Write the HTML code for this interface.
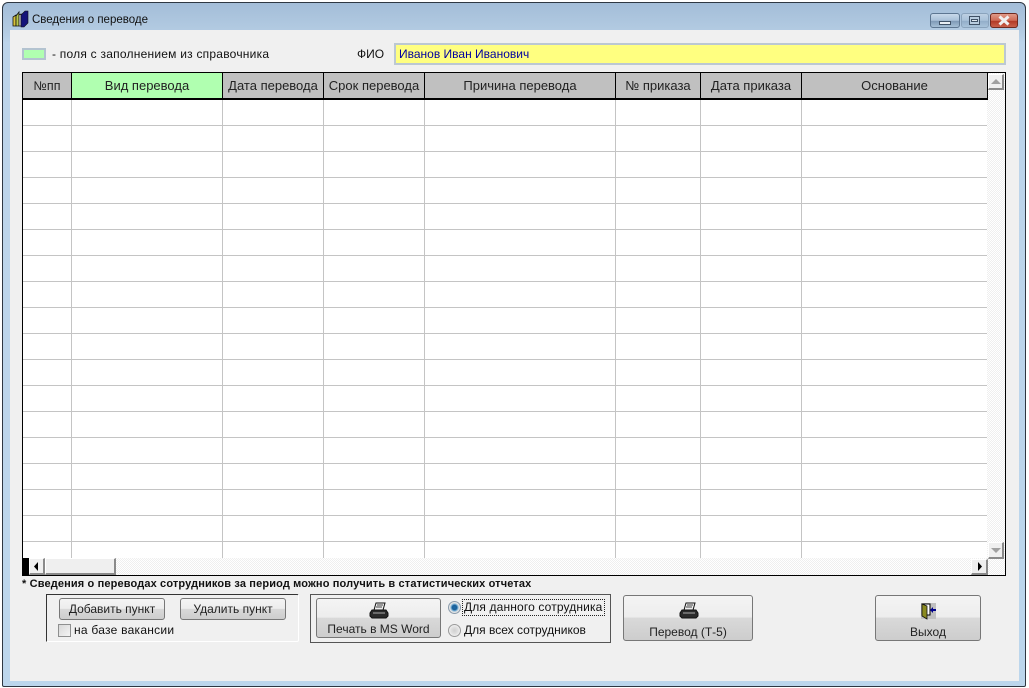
<!DOCTYPE html>
<html><head><meta charset="utf-8"><style>
html,body{margin:0;padding:0;background:#fff}
body{width:1029px;height:688px;position:relative;overflow:hidden;font-family:"Liberation Sans",sans-serif;font-size:12px;color:#111}
div,span{position:absolute;box-sizing:border-box;white-space:nowrap}
svg{position:absolute}
.h{top:73px;height:27px;background:#c0c0c0;border-right:1px solid #000;border-bottom:2px solid #000;text-align:center;line-height:26px;color:#222;font-size:13px}
.v{top:100px;height:458px;width:1px;background:#c4c4c4}
.btn{border:1px solid #777;border-radius:3px;background:linear-gradient(#f4f4f4 0,#ededed 48%,#d9d9d9 50%,#cdcdcd 100%);text-align:center;color:#222}
.sb{background:#efefef;border-top:1px solid #fff;border-left:1px solid #fff;border-right:2px solid #8a8a8a;border-bottom:2px solid #8a8a8a}
.t{line-height:14px}
</style></head><body>
<div style="left:2px;top:2px;width:1024px;height:685px;border:1px solid #2e3742;border-radius:6px 6px 2px 2px;background:linear-gradient(#a3bdd8 0,#b3cbe2 28px,#bcd4ea 40px,#bcd6ec 100%)"></div>
<div style="left:10px;top:30px;width:1009px;height:651px;background:#f0f0f0"></div>

<svg style="left:12px;top:10px" width="17" height="18" viewBox="0 0 17 18"><path d="M1 7l3-2v11H1z" fill="#d8c23a" stroke="#111" stroke-width=".8"/><path d="M4 6l3-4v14H4z" fill="#b8c84a" stroke="#111" stroke-width=".8"/><path d="M7 5l2-1v12H7z" fill="#f0f0f0" stroke="#111" stroke-width=".8"/><path d="M9 5l4-4h3v12l-4 4H9z" fill="#14147a" stroke="#111" stroke-width=".6"/></svg>
<div class="t" style="left:32px;top:13px;font-size:11.5px;color:#111">Сведения о переводе</div>

<div style="left:930px;top:13px;width:30px;height:15px;border:1px solid #5d7691;border-radius:3px;background:linear-gradient(#c8d9ea 0,#a9c0d8 50%,#7f9ab6 55%,#a6bfd6 100%)"></div>
<div style="left:939px;top:21px;width:12px;height:4px;border:1px solid #3f5166;background:#e8eef4"></div>
<div style="left:961px;top:13px;width:28px;height:15px;border:1px solid #8aa3bc;border-radius:3px;background:linear-gradient(#bdd0e3 0,#a9c1d9 50%,#93aec9 55%,#a9c3da 100%)"></div>
<div style="left:969px;top:16px;width:11px;height:9px;border:1px solid #3f5166;background:#b9cde0"></div>
<div style="left:971px;top:19px;width:7px;height:3px;border:1px solid #3f5166;background:#dfe8f0"></div>
<div style="left:990px;top:13px;width:28px;height:15px;border:1px solid #6e2a20;border-radius:3px;background:linear-gradient(#e09a88 0,#cf6a55 50%,#b23a26 55%,#c9604a 100%)"></div>
<svg style="left:997px;top:15px" width="14" height="11" viewBox="0 0 14 11"><path d="M2.500 1.500L11.500 9.500M11.500 1.500L2.500 9.500" stroke="#f0f0f0" stroke-width="3"/></svg>

<div style="left:22px;top:48px;width:24px;height:12px;background:#b0ffb0;border:2px solid #b3c3d0"></div>
<div class="t" style="left:52px;top:47px;letter-spacing:.23px">- поля с заполнением из справочника</div>
<div class="t" style="left:357px;top:47px">ФИО</div>
<div class="t" style="left:394px;top:43px;width:612px;height:22px;background:#ffff80;border:2px solid #bcc8d2;padding-left:3px;line-height:18px;color:#0000a0">Иванов Иван Иванович</div>

<div style="left:22px;top:72px;width:984px;height:504px;background:#fff;border:1px solid #000"></div>
<div style="left:987px;top:73px;width:18px;height:502px;background:conic-gradient(#efefef 25%,#fff 0 50%,#efefef 0 75%,#fff 0) 0 0/2px 2px"></div>
<div style="left:23px;top:558px;width:964px;height:17px;background:conic-gradient(#efefef 25%,#fff 0 50%,#efefef 0 75%,#fff 0) 0 0/2px 2px"></div>
<div style="left:23px;top:100px;width:964px;height:442px;background:repeating-linear-gradient(#fff 0 25px,#c4c4c4 25px 26px)"></div>
<div style="left:23px;top:542px;width:964px;height:16px;background:#fff"></div>
<div class="v" style="left:71px"></div><div class="v" style="left:222px"></div><div class="v" style="left:323px"></div><div class="v" style="left:424px"></div><div class="v" style="left:615px"></div><div class="v" style="left:700px"></div><div class="v" style="left:801px"></div>

<div class="h" style="left:23px;width:49px;font-size:12.5px">№пп</div>
<div class="h" style="left:72px;width:151px;background:#b0ffb0">Вид перевода</div>
<div class="h" style="left:223px;width:101px">Дата перевода</div>
<div class="h" style="left:324px;width:101px">Срок перевода</div>
<div class="h" style="left:425px;width:191px">Причина перевода</div>
<div class="h" style="left:616px;width:85px">№ приказа</div>
<div class="h" style="left:701px;width:101px">Дата приказа</div>
<div class="h" style="left:802px;width:186px">Основание</div>

<div class="sb" style="left:988px;top:74px;width:16px;height:16px"></div>
<svg style="left:990px;top:79px" width="12" height="6"><path d="M1 5L6 0L11 5z" fill="#a0a0a0"/></svg>
<div class="sb" style="left:988px;top:542px;width:16px;height:17px"></div>
<svg style="left:990px;top:548px" width="12" height="6"><path d="M1 0L6 5L11 0z" fill="#a0a0a0"/></svg>
<div style="left:23px;top:558px;width:6px;height:17px;background:#000"></div>
<div class="sb" style="left:29px;top:558px;width:16px;height:17px"></div>
<svg style="left:33px;top:562px" width="6" height="9"><path d="M5 0L1 4.500L5 9z" fill="#000"/></svg>
<div class="sb" style="left:45px;top:558px;width:71px;height:17px"></div>
<div class="sb" style="left:971px;top:559px;width:17px;height:16px"></div>
<svg style="left:977px;top:562px" width="6" height="9"><path d="M1 0L5 4.500L1 9z" fill="#000"/></svg>

<div class="t" style="left:22px;top:577px;font-size:11px;font-weight:bold;color:#111;letter-spacing:.14px">* Сведения о переводах сотрудников за период можно получить в статистических отчетах</div>

<div style="left:46px;top:594px;width:253px;height:48px;border-top:1px solid #333;border-left:1px solid #333;border-right:1px solid #fff;border-bottom:1px solid #fff;border-radius:0 2px 2px 0"></div>
<div class="btn" style="left:59px;top:598px;width:106px;height:22px;line-height:20px">Добавить пункт</div>
<div class="btn" style="left:180px;top:598px;width:106px;height:22px;line-height:20px">Удалить пункт</div>
<div style="left:58px;top:624px;width:13px;height:13px;border:1px solid #8e8f8f;background:linear-gradient(135deg,#d8d8d8,#f4f4f4)"></div>
<div class="t" style="left:74px;top:623px;letter-spacing:.25px">на базе вакансии</div>

<div style="left:310px;top:594px;width:301px;height:49px;border:1px solid #555"></div>
<div class="btn" style="left:316px;top:598px;width:125px;height:40px;padding-top:23px;line-height:15px">Печать в MS Word</div>
<svg style="left:369px;top:602px" width="20" height="17" viewBox="0 0 20 17"><path d="M7 1h9l-2 7H5z" fill="#eee" stroke="#111"/><path d="M8 3h6M7 5h6" stroke="#444"/><path d="M3 8h14l2 3v3l-2 2H3l-2-2v-3z" fill="#2a2a2a" stroke="#111"/><path d="M4 11h12" stroke="#aaa"/></svg>

<div style="left:448px;top:601px;width:13px;height:13px;border-radius:50%;border:1px solid #8a9bab;background:radial-gradient(circle,#1a6aa8 0,#1a5f98 30%,#7fb4d8 45%,#e4e4e4 60%)"></div>
<div class="t" style="left:463px;top:600px;width:141px;height:15px;padding:0 1px;outline:1px dotted #222;line-height:15px;letter-spacing:.14px">Для данного сотрудника</div>
<div style="left:448px;top:624px;width:13px;height:13px;border-radius:50%;border:1px solid #9a9a9a;background:radial-gradient(circle,#cfcfcf 0,#e0e0e0 45%,#f6f6f6 80%)"></div>
<div class="t" style="left:464px;top:623px">Для всех сотрудников</div>

<div class="btn" style="left:623px;top:595px;width:130px;height:46px;padding-top:28px;line-height:16px">Перевод (Т-5)</div>
<svg style="left:679px;top:602px" width="20" height="17" viewBox="0 0 20 17"><path d="M7 1h9l-2 7H5z" fill="#eee" stroke="#111"/><path d="M8 3h6M7 5h6" stroke="#444"/><path d="M3 8h14l2 3v3l-2 2H3l-2-2v-3z" fill="#2a2a2a" stroke="#111"/><path d="M4 11h12" stroke="#aaa"/></svg>

<div class="btn" style="left:875px;top:595px;width:106px;height:46px;padding-top:28px;line-height:16px">Выход</div>
<svg style="left:920px;top:603px" width="17" height="17" viewBox="0 0 17 17"><rect x="1" y="0" width="15" height="16" fill="#c0c0c0"/><path d="M2 1h8v11H2z" fill="#fff" stroke="#000"/><path d="M2 1l5 2v13l-5-3z" fill="#8a8a20" stroke="#111" stroke-width=".8"/><path d="M16 6h-3V4l-3 3 3 3V8h3z" fill="#00008a"/></svg>
</body></html>
